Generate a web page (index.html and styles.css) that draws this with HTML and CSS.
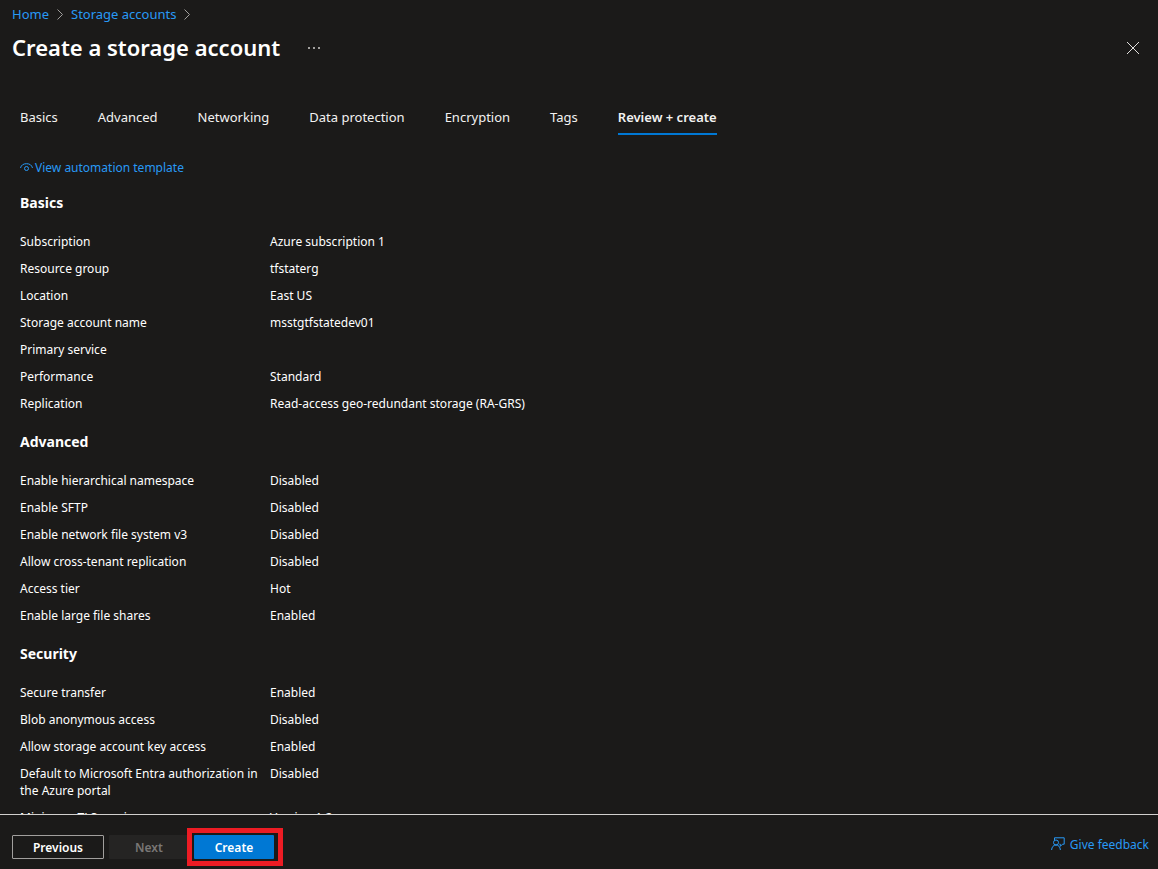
FILE: index.html
```html
<!DOCTYPE html>
<html lang="en">
<head>
    <meta charset="UTF-8">
    <meta name="viewport" content="width=device-width, initial-scale=1.0">
    <title>Create a storage account</title>
    <link rel="stylesheet" href="styles.css">
</head>
<body>

<header class="page-header">
    <nav class="breadcrumb" aria-label="Breadcrumb">
        <a href="#">Home</a>
        <svg class="chevron" width="6" height="11" viewBox="0 0 6 11"><path d="M0.5 0.5L5.5 5.5L0.5 10.5"/></svg>
        <a href="#">Storage accounts</a>
        <svg class="chevron" width="6" height="11" viewBox="0 0 6 11"><path d="M0.5 0.5L5.5 5.5L0.5 10.5"/></svg>
    </nav>
    <div class="title-bar">
        <h1>Create a storage account</h1>
        <button class="icon-btn" aria-label="More">
            <svg width="12" height="2" viewBox="0 0 12 2"><path fill="#a19f9d" d="M0 0h2v2H0zM5 0h2v2H5zM10 0h2v2h-2z"/></svg>
        </button>
        <button class="icon-btn close-btn" aria-label="Close">
            <svg width="12" height="12" viewBox="0 0 12 12"><path fill="none" stroke="#e1dfdd" d="M0 0L12 12M12 0L0 12"/></svg>
        </button>
    </div>
</header>

<nav class="tabs">
    <a href="#">Basics</a>
    <a href="#">Advanced</a>
    <a href="#">Networking</a>
    <a href="#">Data protection</a>
    <a href="#">Encryption</a>
    <a href="#">Tags</a>
    <a href="#" class="active">Review + create</a>
</nav>

<main class="content">
    <a href="#" class="template-link">
        <svg width="13" height="10" viewBox="0 0 13 10"><path d="M0.5 5C1.2 2 3.5 0.7 6.5 0.7S11.8 2 12.5 5"/><circle cx="6.5" cy="5.5" r="2"/></svg>
        View automation template
    </a>

    <section>
        <h2>Basics</h2>
        <dl>
            <dt>Subscription</dt><dd>Azure subscription 1</dd>
            <dt>Resource group</dt><dd>tfstaterg</dd>
            <dt>Location</dt><dd>East US</dd>
            <dt>Storage account name</dt><dd>msstgtfstatedev01</dd>
            <dt>Primary service</dt><dd></dd>
            <dt>Performance</dt><dd>Standard</dd>
            <dt>Replication</dt><dd>Read-access geo-redundant storage (RA-GRS)</dd>
        </dl>
    </section>

    <section>
        <h2>Advanced</h2>
        <dl>
            <dt>Enable hierarchical namespace</dt><dd>Disabled</dd>
            <dt>Enable SFTP</dt><dd>Disabled</dd>
            <dt>Enable network file system v3</dt><dd>Disabled</dd>
            <dt>Allow cross-tenant replication</dt><dd>Disabled</dd>
            <dt>Access tier</dt><dd>Hot</dd>
            <dt>Enable large file shares</dt><dd>Enabled</dd>
        </dl>
    </section>

    <section>
        <h2>Security</h2>
        <dl>
            <dt>Secure transfer</dt><dd>Enabled</dd>
            <dt>Blob anonymous access</dt><dd>Disabled</dd>
            <dt>Allow storage account key access</dt><dd>Enabled</dd>
            <dt>Default to Microsoft Entra authorization in the Azure portal</dt><dd>Disabled</dd>
            <dt>Minimum TLS version</dt><dd>Version 1.2</dd>
        </dl>
    </section>
</main>

<footer class="footer">
    <button class="btn btn-previous">Previous</button>
    <button class="btn btn-next" disabled>Next</button>
    <div class="highlight">
        <button class="btn btn-create">Create</button>
    </div>
    <a href="#" class="feedback">
        <svg width="14" height="14" viewBox="0 0 14 14"><path d="M3.5 3V0.8h9.7v6.4H11.5L9.3 9.4V7.2H8.5"/><circle cx="5" cy="5.5" r="2.5"/><path d="M0.6 13C0.8 10 2.4 8 5 8S9.2 10 9.4 13"/></svg>
        Give feedback
    </a>
</footer>

</body>
</html>
```

FILE: styles.css
```css
* {
    box-sizing: border-box;
}

body {
    margin: 0;
    height: 100vh;
    display: flex;
    flex-direction: column;
    background-color: #1b1a19;
    color: #fff;
    font-family: 'Segoe UI', 'Noto Sans', sans-serif;
    font-size: 12px;
    line-height: 17px;
}

a {
    color: #2899f5;
    text-decoration: none;
}

a:hover {
    text-decoration: underline;
}

.page-header {
    padding: 5px 13px 0 12px;
}

.breadcrumb {
    display: flex;
    align-items: center;
    gap: 8px;
    font-size: 13px;
    line-height: 18px;
}

.chevron {
    fill: none;
    stroke: #a19f9d;
}

.title-bar {
    display: flex;
    align-items: center;
    gap: 22px;
    padding-top: 8px;
}

h1 {
    margin: 0;
    padding-bottom: 2px;
    font-size: 22px;
    font-weight: 600;
    line-height: 32px;
}

.icon-btn {
    display: flex;
    padding: 6px;
    border: none;
    background: none;
    cursor: pointer;
}

.close-btn {
    margin-left: auto;
}

.tabs {
    display: flex;
    gap: 40px;
    padding: 40px 20px 0;
    font-size: 13px;
    line-height: 24px;
}

.tabs a {
    padding-bottom: 4px;
    border-bottom: 2px solid transparent;
    color: #f3f2f1;
}

.tabs .active {
    border-color: #0078d4;
    font-weight: 600;
}

.content {
    flex: 1;
    min-height: 0;
    padding: 24px 20px 0;
    overflow-y: auto;
    scrollbar-width: none;
}

.template-link {
    display: flex;
    align-items: center;
    gap: 2px;
    margin-bottom: 2px;
}

svg {
    flex: none;
}

.template-link svg,
.feedback svg {
    fill: none;
    stroke: #2899f5;
}

h2 {
    margin: 0;
    padding: 15px 0;
    font-size: 14px;
    font-weight: 700;
    line-height: 20px;
}

dl {
    display: grid;
    grid-template-columns: 250px 1fr;
    margin: 0;
}

dt,
dd {
    margin: 0;
    padding: 5px 0;
}

.footer {
    display: flex;
    align-items: center;
    gap: 5px;
    height: 55px;
    padding: 10px 9px 0 12px;
    border-top: 1px solid #d2d0ce;
}

.btn {
    width: 80px;
    height: 24px;
    padding: 0;
    border: none;
    border-radius: 1px;
    font-family: inherit;
    font-size: 12px;
    font-weight: 600;
    cursor: pointer;
}

.btn-previous {
    width: 92px;
    border: 1px solid #a19f9d;
    background-color: #1b1a19;
    color: #fff;
}

.btn-next {
    background-color: #252423;
    color: #797775;
    cursor: default;
}

.btn-create {
    background-color: #0078d4;
    color: #fff;
}

.highlight {
    position: relative;
    display: flex;
}

.highlight::after {
    content: '';
    position: absolute;
    inset: -7px -9px -7px -7px;
    border: 5px solid #ed1c24;
    pointer-events: none;
}

.feedback {
    display: flex;
    align-items: center;
    gap: 5px;
    margin-left: auto;
    padding-bottom: 6px;
}
```
